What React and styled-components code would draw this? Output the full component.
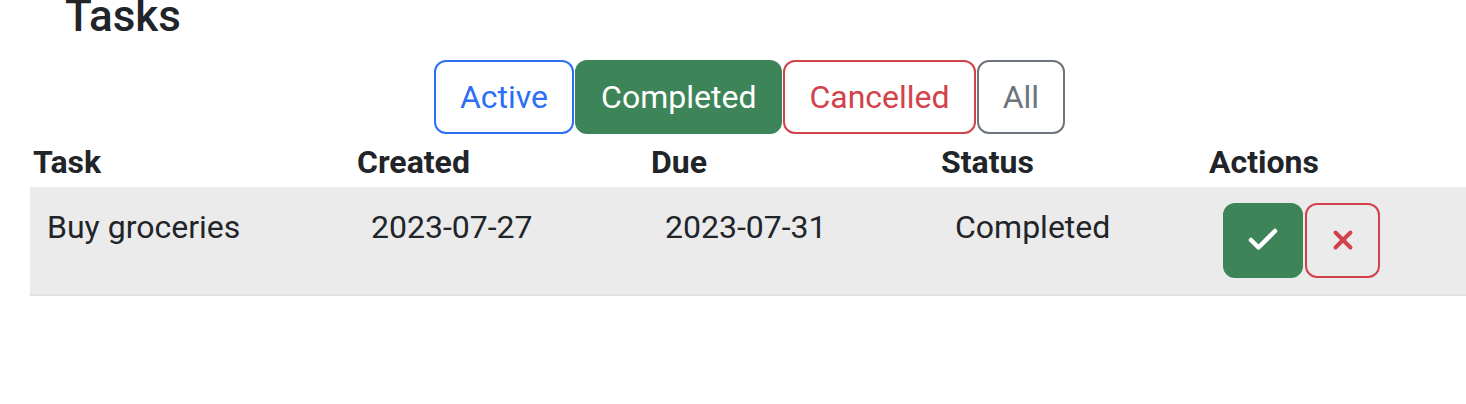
import React from "react";
import styled, { createGlobalStyle } from "styled-components";
import { Check, X } from "lucide-react";

const GlobalStyle = createGlobalStyle`
  html, body {
    margin: 0;
    padding: 0;
    background: #fff;
    overflow: hidden;
  }
  body {
    font-family: Roboto, "Liberation Sans", sans-serif;
    color: #212529;
  }
`;

const Page = styled.div`
  width: 1439px;
  margin-left: 30px;
`;

const Title = styled.h1`
  margin: -10px 0 0 35px;
  font-size: 44px;
  font-weight: 500;
  line-height: 1.2;
`;

const Filters = styled.div`
  display: flex;
  justify-content: center;
  gap: 1px;
  margin-top: 17px;
`;

const FilterButton = styled.button`
  font-family: inherit;
  font-size: 32px;
  line-height: 48px;
  padding: 11px 24px;
  border-radius: 12px;
  border: 2px solid ${(p) => p.$color};
  background: ${(p) => (p.$active ? p.$color : "#fff")};
  color: ${(p) => (p.$active ? "#fff" : p.$color)};
  cursor: pointer;
`;

const Table = styled.table`
  width: 100%;
  margin-top: 4px;
  border-collapse: collapse;
  table-layout: fixed;
  font-size: 32px;
  line-height: 48px;
`;

const HeadCell = styled.th`
  box-sizing: border-box;
  text-align: left;
  font-weight: 700;
  padding: 0 3px 1px;
  width: ${(p) => p.$w || "auto"};
`;

const Row = styled.tr`
  background: #ebebeb;
  border-bottom: 2px solid #dee2e6;
`;

const Cell = styled.td`
  vertical-align: top;
  padding: 16px 17px;
`;

const Actions = styled.div`
  display: flex;
  gap: 2px;
`;

const ActionButton = styled.button`
  display: flex;
  align-items: center;
  justify-content: center;
  width: ${(p) => p.$w}px;
  height: 75px;
  border-radius: 12px;
  padding: 0;
  border: 2px solid ${(p) => p.$color};
  background: ${(p) => (p.$solid ? p.$color : "transparent")};
  color: ${(p) => (p.$solid ? "#fff" : p.$color)};
  cursor: pointer;
`;

const filters = [
  { label: "Active", color: "#2c6ff5" },
  { label: "Completed", color: "#3d8558", active: true },
  { label: "Cancelled", color: "#d1424a" },
  { label: "All", color: "#6c757d" },
];

export default function App() {
  return (
    <>
      <GlobalStyle />
      <Page>
        <Title>Tasks</Title>
        <Filters>
          {filters.map((f) => (
            <FilterButton key={f.label} $color={f.color} $active={f.active}>
              {f.label}
            </FilterButton>
          ))}
        </Filters>
        <Table>
          <thead>
            <tr>
              <HeadCell $w="324px">Task</HeadCell>
              <HeadCell $w="294px">Created</HeadCell>
              <HeadCell $w="290px">Due</HeadCell>
              <HeadCell $w="268px">Status</HeadCell>
              <HeadCell>Actions</HeadCell>
            </tr>
          </thead>
          <tbody>
            <Row>
              <Cell>Buy groceries</Cell>
              <Cell>2023-07-27</Cell>
              <Cell>2023-07-31</Cell>
              <Cell>Completed</Cell>
              <Cell>
                <Actions>
                  <ActionButton $w={80} $color="#3d8558" $solid>
                    <Check size={36} strokeWidth={3} />
                  </ActionButton>
                  <ActionButton $w={75} $color="#d1424a">
                    <X size={30} strokeWidth={3.2} />
                  </ActionButton>
                </Actions>
              </Cell>
            </Row>
          </tbody>
        </Table>
      </Page>
    </>
  );
}
